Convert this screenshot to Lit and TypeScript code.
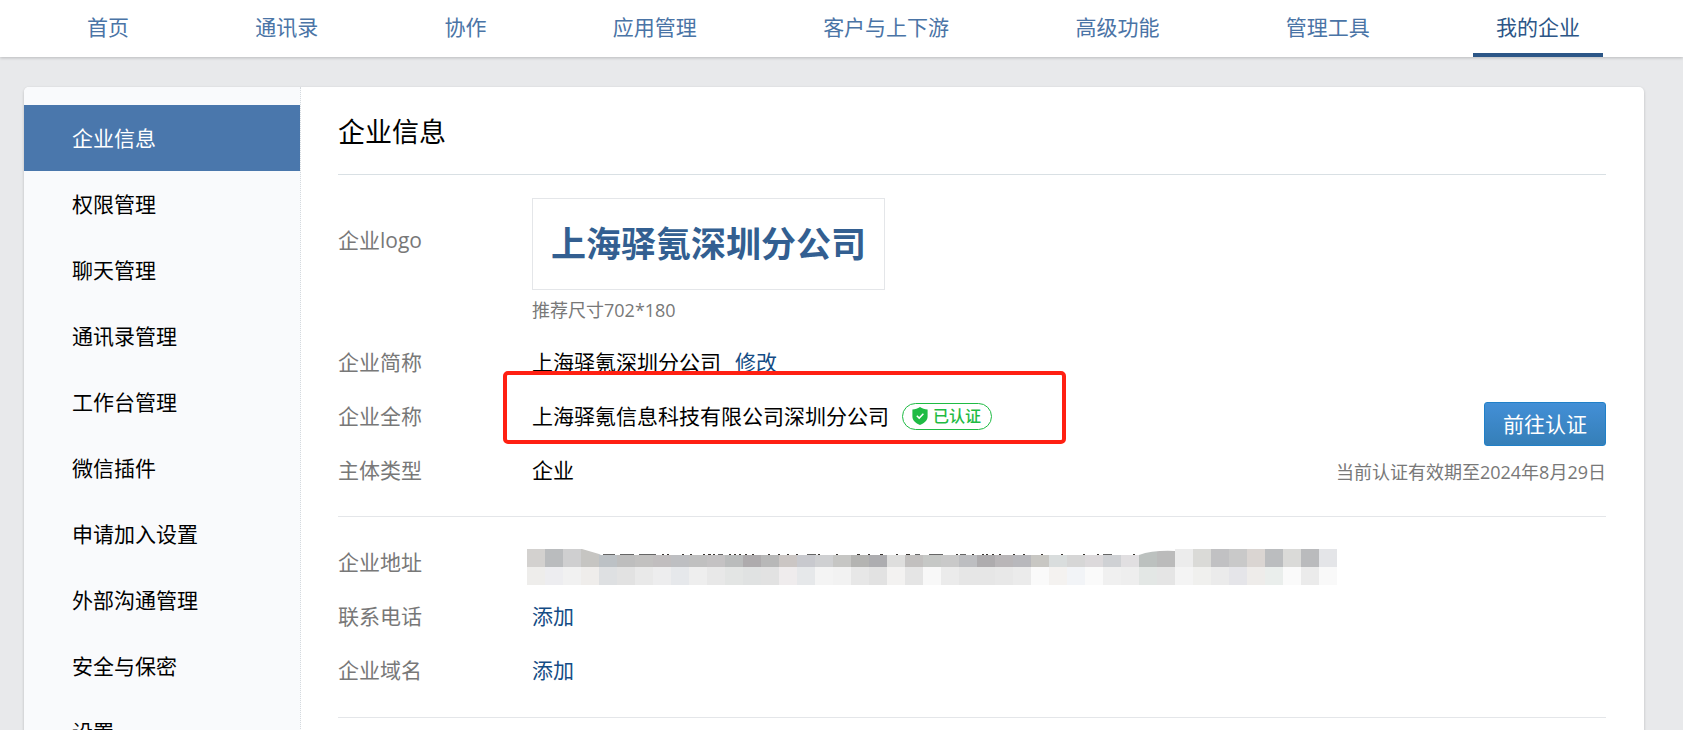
import { LitElement, html, svg, css } from "lit";
import { customElement, property } from "lit/decorators.js";
import { classMap } from "lit/directives/class-map.js";

const NAV = ["首页", "通讯录", "协作", "应用管理", "客户与上下游", "高级功能", "管理工具", "我的企业"];
const MENU = [
  "企业信息", "权限管理", "聊天管理", "通讯录管理", "工作台管理",
  "微信插件", "申请加入设置", "外部沟通管理", "安全与保密", "设置",
];

// Two rows of colour blocks that hide the street address.
const CELL = 18;
const MASK_ROWS = [
  "d3d1cf babcbe cfcfd0 c6c5c2 bcc1c5 bebebe c2c1c0 c1bebf bebfc2 c0c0c0 c4c2c3 babcbc aeabad b8b8b8 cbc6c4 c8c9ce cfd0d2 c6c6c4 b4b4b2 adadb0 dededd c2c0bf c6c8c6 c9c9c9 bdbec1 aeacae b9b6b8 b8b8bc c8c7c3 d9dddd d6d6d6 dcd9db cfd1d4 e1dfe1 bcc1bf bbbbbb ececec dadad7 c1c1c3 c9c9c9 dad5d2 bbbdbf dadad8 babbbd e4e5e8",
  "eeedeb ededf0 f1f1f1 efedeb dee0e2 e2e2e2 e9e9e9 ededee e6e8eb eeeeee e8e8e8 e3e5e4 e0e2e2 e2e2e2 efeced e6e8ea f4f4f4 f2f2f2 e7e7e7 e2e2e2 f3f2f1 e5e5e5 f8f8f8 ebebeb e6e6e6 e6e6e6 e8e8e8 ebebeb fafafa f4f2f0 f2f4f7 fafafa f0f0f0 eeeeee e3e7e5 e5e5e5 f4f4f4 f0f0ee ebebeb e5e5e9 eeecea eaeeec fafafa ebebeb f9f9f9",
].map((row) => row.split(" "));

// Stroke tops that stay visible above the blocks: [start, length].
const STROKES = [
  [76, 12], [93, 14], [112, 17], [135, 2], [140, 2], [155, 2], [163, 2], [176, 2], [181, 3], [186, 2],
  [191, 5], [202, 2], [207, 2], [212, 2], [218, 2], [225, 2], [241, 2], [251, 2], [260, 2], [269, 2],
  [280, 9], [291, 2], [309, 2], [330, 3], [341, 2], [353, 3], [369, 2], [379, 4], [388, 5], [402, 14],
  [429, 2], [433, 6], [445, 2], [455, 2], [459, 2], [465, 2], [472, 2], [486, 2], [496, 2], [514, 2],
  [534, 2], [556, 2], [570, 2], [576, 9], [606, 2],
];

@customElement("address-mask")
export class AddressMask extends LitElement {
  static styles = css`
    :host { display: block; }
    svg { display: block; }
  `;
  render() {
    return html`<svg width="810" height="36" viewBox="0 0 810 36" shape-rendering="crispEdges" aria-hidden="true">
      ${MASK_ROWS.map((row, y) => row.map((c, x) => svg`<rect x=${x * CELL} y=${y * CELL} width=${CELL} height=${CELL} fill=${"#" + c}></rect>`))}
      <path d="M55 0 L72 5 L74 6 H612 Q626 1 648 2 V0Z" fill="#fff" shape-rendering="auto"></path>
      ${STROKES.map(([x, w]) => svg`<rect x=${x} y="5" width=${w} height="1" fill=${w > 4 ? "#666" : "#3a3632"}></rect>`)}
    </svg>`;
  }
}

@customElement("verified-badge")
export class VerifiedBadge extends LitElement {
  static styles = css`
    :host {
      display: inline-flex; align-items: center; gap: 5px; box-sizing: border-box;
      height: 27px; padding: 0 10px 0 9px; border: 1px solid #1fbb44; border-radius: 14px;
      color: #1fbb44; font-size: 16px; line-height: 24px; font-weight: 500;
    }
    svg { display: block; }
  `;
  render() {
    return html`<svg width="16" height="18" viewBox="0 0 16 18" aria-hidden="true">
        <path d="M8 0 C10.2 1.5 12.8 2.3 15.6 2.5 V9.5 C15.6 13.6 12.4 16.2 8 18 C3.6 16.2 .4 13.6 .4 9.5 V2.5 C3.2 2.3 5.8 1.5 8 0Z" fill="#1fbb44"></path>
        <path d="M4.8 8.8 L7.2 11.1 L11.4 6.8" fill="none" stroke="#fff" stroke-width="1.5"></path>
      </svg><span>已认证</span>`;
  }
}

@customElement("info-row")
export class InfoRow extends LitElement {
  @property() label = "";
  static styles = css`
    :host { display: flex; align-items: center; min-height: 54px; }
    .label { flex: 0 0 194px; color: #787878; }
    .value { position: relative; display: flex; align-items: center; color: #000; white-space: nowrap; }
  `;
  render() {
    return html`<span class="label">${this.label}</span><div class="value"><slot></slot></div>`;
  }
}

@customElement("app-root")
export class AppRoot extends LitElement {
  static styles = css`
    :host {
      display: flex; flex-direction: column; height: 100vh; overflow: hidden;
      background: #e8e9eb; color: #000;
      font: 21px/30px "Open Sans", "Noto Sans CJK SC", sans-serif;
    }
    a { color: #144c85; text-decoration: none; }
    .top {
      flex: none; display: flex; justify-content: space-between; height: 57px;
      padding: 0 80px 0 64px; background: #fff; box-sizing: border-box;
      box-shadow: 0 1px 3px rgba(0, 0, 0, 0.2);
    }
    .tab {
      padding: 12px 23px 11px; border-bottom: 4px solid transparent;
      color: #4a74a6; white-space: nowrap;
    }
    .tab.on { color: #2c5687; border-color: #2c5687; }
    .card {
      flex: none; display: flex; margin: 30px 39px 30px 24px; background: #fff;
      border-radius: 5px; box-shadow: 0 1px 3px rgba(0, 0, 0, 0.2); overflow: hidden;
    }
    .side {
      flex: 0 0 276px; padding: 18px 0; background: #f9fafc; border-right: 1px dotted #d5dade;
    }
    .item { display: block; padding: 18px 48px; color: #000; }
    .item.on { background: #4a77ac; color: #fff; }
    .main { flex: 1; min-width: 0; padding: 0 38px 0 37px; }
    h1 {
      margin: 0; padding: 27px 0 24px; font-size: 27px; line-height: 36px; font-weight: 400;
      border-bottom: 1px solid #d9e0e4;
    }
    .group { border-bottom: 1px solid #e4e6e9; padding: 18px 0 20px; }
    .split { display: flex; justify-content: space-between; align-items: flex-end; padding: 23px 0 19px; }
    .logo-row { display: flex; padding-bottom: 13px; }
    .logo-label { flex: 0 0 194px; padding-top: 27px; color: #787878; }
    .logo {
      display: flex; align-items: center; justify-content: center; box-sizing: border-box;
      width: 353px; height: 92px; border: 1px solid #e4e6e9;
      color: #335f91; font-size: 35px; line-height: 48px; font-weight: 700;
    }
    .small { margin: 0; font-size: 18px; line-height: 24px; color: #787878; }
    .hint { padding-top: 8px; }
    .edit { margin-left: 14px; }
    verified-badge { margin-left: 13px; }
    .mark {
      position: absolute; left: -29px; top: -30px; width: 563px; height: 73px; box-sizing: border-box;
      border: 4px solid #ff2012; border-radius: 5px; pointer-events: none;
    }
    address-mask { margin-left: -5px; padding-top: 10px; }
    .action { display: flex; flex-direction: column; align-items: flex-end; gap: 14px; padding-bottom: 13px; }
    button {
      height: 44px; padding: 0 18px; border: 1px solid #2080c8; border-radius: 3px;
      background: linear-gradient(#438fd6, #357fb8); color: #fff; font: inherit;
    }
  `;

  render() {
    return html`
      <nav class="top">
        ${NAV.map((t, i) => html`<a href="#" class=${classMap({ tab: true, on: i === NAV.length - 1 })}>${t}</a>`)}
      </nav>
      <div class="card">
        <nav class="side">
          ${MENU.map((t, i) => html`<a href="#" class=${classMap({ item: true, on: i === 0 })}>${t}</a>`)}
        </nav>
        <main class="main">
          <h1>企业信息</h1>
          <section class="group split">
            <div>
              <div class="logo-row">
                <span class="logo-label">企业logo</span>
                <div>
                  <div class="logo">上海驿氪深圳分公司</div>
                  <p class="small hint">推荐尺寸702*180</p>
                </div>
              </div>
              <info-row label="企业简称">上海驿氪深圳分公司<a class="edit" href="#">修改</a></info-row>
              <info-row label="企业全称">上海驿氪信息科技有限公司深圳分公司<verified-badge></verified-badge><span class="mark"></span></info-row>
              <info-row label="主体类型">企业</info-row>
            </div>
            <div class="action">
              <button type="button">前往认证</button>
              <p class="small">当前认证有效期至2024年8月29日</p>
            </div>
          </section>
          <section class="group">
            <info-row label="企业地址"><address-mask></address-mask></info-row>
            <info-row label="联系电话"><a href="#">添加</a></info-row>
            <info-row label="企业域名"><a href="#">添加</a></info-row>
          </section>
        </main>
      </div>
    `;
  }
}
